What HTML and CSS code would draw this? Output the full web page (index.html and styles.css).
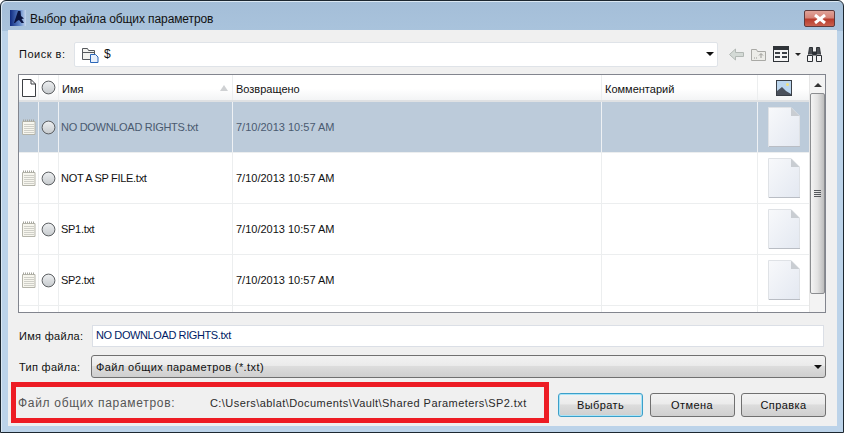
FILE: index.html
```html
<!DOCTYPE html>
<html lang="ru">
<head>
<meta charset="utf-8">
<title>Выбор файла общих параметров</title>
<link rel="stylesheet" href="styles.css">
</head>
<body>
<svg class="defs" width="0" height="0">
  <defs>
    <linearGradient id="radio" x1="0" y1="0" x2="0" y2="1"><stop offset="0" stop-color="#eef0f2"/><stop offset="1" stop-color="#c6cacd"/></linearGradient>
    <linearGradient id="thumb" x1="0" y1="0" x2="1" y2="1"><stop offset="0" stop-color="#f8f9fb"/><stop offset="1" stop-color="#e3e8f1"/></linearGradient>
    <linearGradient id="app" x1="0" y1="0" x2="1" y2="0"><stop offset="0" stop-color="#0f2a80"/><stop offset=".6" stop-color="#5f86c8"/><stop offset="1" stop-color="#c5d6ec"/></linearGradient>
    <symbol id="i-radio" viewBox="0 0 15 15"><circle cx="7.500" cy="7.500" r="6.400" fill="url(#radio)" stroke="#5c5f62" stroke-width="1"/></symbol>
    <symbol id="i-note" viewBox="0 0 14 16"><path d="M.5 2.500h12.500v13H.5z" fill="#f7f6ee" stroke="#b4b4aa"/><path d="M2 5.500h10M2 7.500h10M2 9.500h10M2 11.500h10M2 13.500h10" stroke="#cfcfc8"/><path d="M1 1.500h12" stroke="#a6a69e" stroke-dasharray="1 1" stroke-width="2"/></symbol>
    <symbol id="i-thumb" viewBox="0 0 32 40"><path d="M.5.500H23L31.500 9v30.500H.5z" fill="url(#thumb)" stroke="#dfe2e6"/><path d="M23 .5V9h8.500z" fill="#c9cdd2"/><path d="M1 39.500h31" stroke="#b9bdc4"/></symbol>
  </defs>
</svg>
<div class="window">
  <header class="titlebar">
    <svg class="app-icon" width="16" height="16" viewBox="0 0 16 16"><rect width="16" height="16" fill="url(#app)"/><path d="M4 13 8 1h2.500l.5 5 3 2.500-2.500.5 2.500 4h-2.500L9 10l-2 1-2 2z" fill="#0a1440"/></svg>
    <span class="title">Выбор файла общих параметров</span>
    <button class="close" aria-label="Закрыть"><svg width="14" height="10" viewBox="0 0 14 10"><path d="M2 1 12 9M12 1 2 9" stroke="#fff" stroke-width="3"/></svg></button>
  </header>
  <main class="panel">
    <div class="lookin">
      <label class="lookin-label">Поиск в:</label>
      <div class="lookin-combo">
        <svg width="17" height="17" viewBox="0 0 17 17"><path d="M.5 2.500h5l1 2h6v9H.5z" fill="#f2f2ee" stroke="#55585c"/><path d="M1 6.500h11" stroke="#55585c"/><path d="M8.500 8.500h5l2.500 2.500v5.500H8.500z" fill="#e8f0fb" stroke="#2a66b8"/></svg>
        <span class="lookin-value">$</span>
        <span class="arrow"></span>
      </div>
      <div class="tools">
        <svg width="15" height="13" viewBox="0 0 15 13"><path d="M.5 6.500 6.500 1v3.500h8v4h-8V12z" fill="#d4dad6" stroke="#b2b8b4"/></svg>
        <svg class="tool-up" width="15" height="13" viewBox="0 0 15 13"><path d="M.5 1.500h5l1 2h8v9H.5z" fill="#ecece8" stroke="#a9a9a5"/><path d="M10 10V6M8 7.500l2-2 2 2M3 10h1M5 10h1" stroke="#9a9a96" fill="none"/></svg>
        <svg class="tool-view" width="16" height="16" viewBox="0 0 16 16"><rect x=".5" y=".5" width="15" height="15" fill="#f4f4f4" stroke="#2f3338"/><rect x="1" y="1" width="14" height="3" fill="#2f3338"/><path d="M2 6h5v2H2zM9 6h5v2H9zM2 10h5v2H2zM9 10h5v2H9z" fill="#3c4046"/></svg>
        <span class="tool-arrow"></span>
        <svg class="tool-find" width="17" height="17" viewBox="0 0 17 17"><path d="M2.500 8.500 3.500 1.500h3v7M14.500 8.500l-1-7h-3v7" fill="#4a4e53" stroke="#2c3035"/><path d="M6.500 5.500h4v4h-4z" fill="#2c3035"/><path d="M1.500 9.500h5v6h-5zM10.500 9.500h5v6h-5z" fill="#f4f4f4" stroke="#2c3035"/></svg>
      </div>
    </div>

    <section class="list">
      <div class="list-body">
        <div class="row head">
          <div class="cell"><svg width="14" height="18" viewBox="0 0 14 18"><path d="M.5.500H9L13.500 5v12.500H.5z" fill="#fff" stroke="#3c3f43"/><path d="M9 .5V5h4.500" fill="none" stroke="#3c3f43"/></svg></div>
          <div class="cell"><svg class="radio" width="15" height="15"><use href="#i-radio"/></svg></div>
          <div class="cell text">Имя<span class="sort"></span></div>
          <div class="cell text">Возвращено</div>
          <div class="cell text">Комментарий</div>
          <div class="cell"><svg width="16" height="16" viewBox="0 0 16 16"><rect x=".5" y=".5" width="15" height="15" fill="#bcd6ee" stroke="#3a3f47"/><circle cx="11.500" cy="4.500" r="1.500" fill="#f3e27a"/><path d="M1 15V11l5-4 4 4 5 3v1z" fill="#4b515c"/></svg></div>
        </div>
        <div class="row selected">
          <div class="cell"><svg width="14" height="16"><use href="#i-note"/></svg></div>
          <div class="cell"><svg class="radio" width="15" height="15"><use href="#i-radio"/></svg></div>
          <div class="cell text file">NO DOWNLOAD RIGHTS.txt</div>
          <div class="cell text">7/10/2013 10:57 AM</div>
          <div class="cell"></div>
          <div class="cell"><svg width="32" height="40"><use href="#i-thumb"/></svg></div>
        </div>
        <div class="row">
          <div class="cell"><svg width="14" height="16"><use href="#i-note"/></svg></div>
          <div class="cell"><svg class="radio" width="15" height="15"><use href="#i-radio"/></svg></div>
          <div class="cell text file">NOT A SP FILE.txt</div>
          <div class="cell text">7/10/2013 10:57 AM</div>
          <div class="cell"></div>
          <div class="cell"><svg width="32" height="40"><use href="#i-thumb"/></svg></div>
        </div>
        <div class="row">
          <div class="cell"><svg width="14" height="16"><use href="#i-note"/></svg></div>
          <div class="cell"><svg class="radio" width="15" height="15"><use href="#i-radio"/></svg></div>
          <div class="cell text file">SP1.txt</div>
          <div class="cell text">7/10/2013 10:57 AM</div>
          <div class="cell"></div>
          <div class="cell"><svg width="32" height="40"><use href="#i-thumb"/></svg></div>
        </div>
        <div class="row">
          <div class="cell"><svg width="14" height="16"><use href="#i-note"/></svg></div>
          <div class="cell"><svg class="radio" width="15" height="15"><use href="#i-radio"/></svg></div>
          <div class="cell text file">SP2.txt</div>
          <div class="cell text">7/10/2013 10:57 AM</div>
          <div class="cell"></div>
          <div class="cell"><svg width="32" height="40"><use href="#i-thumb"/></svg></div>
        </div>
        <div class="row stub">
          <div class="cell"></div><div class="cell"></div><div class="cell"></div><div class="cell"></div><div class="cell"></div><div class="cell"></div>
        </div>
      </div>
      <div class="scrollbar">
        <span class="scroll-up"></span>
        <div class="thumb"><span class="grip"></span></div>
      </div>
    </section>

    <div class="field">
      <label class="field-label">Имя файла:</label>
      <div class="input">NO DOWNLOAD RIGHTS.txt</div>
    </div>
    <div class="field type">
      <label class="field-label">Тип файла:</label>
      <div class="select">Файл общих параметров (*.txt)<span class="arrow"></span></div>
    </div>

    <div class="bottom">
      <div class="shared">
        <span class="shared-label">Файл общих параметров:</span>
        <span class="shared-path">C:\Users\ablat\Documents\Vault\Shared Parameters\SP2.txt</span>
      </div>
      <div class="buttons">
        <button class="btn primary">Выбрать</button>
        <button class="btn">Отмена</button>
        <button class="btn">Справка</button>
      </div>
    </div>
  </main>
</div>
</body>
</html>
```
FILE: styles.css
```css
* { box-sizing: border-box; }
html, body { margin: 0; padding: 0; background: #fff; }
body { width: 846px; height: 434px; overflow: hidden; font-family: "Liberation Sans", sans-serif; font-size: 11px; color: #111; }
.defs { display: block; height: 0; }
.window { width: 844px; height: 433px; border: 1px solid #1c2730; border-radius: 6px 6px 0 0; background: linear-gradient(#a4bed8 0, #a9c3dc 30px, #bcd3e9 30px, #bcd3e9 100%); box-shadow: inset 1px 1px 0 #dbe8f3; padding: 0 6px 6px 7px; display: flex; flex-direction: column; }
.titlebar { height: 29px; flex: none; display: flex; align-items: flex-start; padding-top: 9px; margin-left: 2px; }
.app-icon { flex: none; }
.title { margin-left: 4px; margin-top: 2px; font-size: 12px; line-height: 14px; letter-spacing: -0.100px; color: #111; }
.close { margin-left: auto; margin-right: 2px; width: 31px; height: 17px; padding: 0; border: 1px solid #5e3a3c; border-radius: 2px; background: linear-gradient(#e0a298 0, #d58478 45%, #b83c2c 55%, #c9614f 100%); display: flex; align-items: center; justify-content: center; }
.panel { flex: 1; background: #f0f0f0; padding: 11px 10px 0 3px; display: flex; flex-direction: column; min-height: 0; }
.lookin { display: flex; align-items: center; height: 26px; padding-left: 8px; flex: none; }
.lookin-label { width: 55px; flex: none; letter-spacing: 0.500px; }
.lookin-combo { width: 644px; height: 25px; background: #fff; border: 1px solid #dfe3e8; border-radius: 2px; display: flex; align-items: center; padding-left: 7px; }
.lookin-value { margin-left: 5px; font-size: 12px; }
.arrow { display: block; width: 0; height: 0; border-left: 4px solid transparent; border-right: 4px solid transparent; border-top: 4px solid #111; margin-left: auto; margin-right: 3px; }
.tools { display: flex; align-items: center; margin-left: 11px; }
.tool-up { margin-left: 7px; }
.tool-view { margin-left: 7px; }
.tool-arrow { width: 0; height: 0; border-left: 3px solid transparent; border-right: 3px solid transparent; border-top: 3px solid #222; margin-left: 6px; }
.tool-find { margin-left: 5px; }
.list { margin-top: 7px; margin-left: 7px; width: 808px; height: 239px; border: 1px solid #82858e; background: #fff; display: flex; flex: none; overflow: hidden; }
.list-body { width: 790px; flex: none; }
.row { display: grid; grid-template-columns: 20px 20px 174px 369px 156px 51px; height: 51px; border-bottom: 1px solid #eceeef; }
.row.head { height: 27px; background: linear-gradient(#fff 0, #fff 55%, #f3f4f5 100%); border-bottom: 2px solid #dfe1e3; }
.row.head .text { padding-top: 2px; }
.row.selected { background: #bccbda; color: #4a5a70; }
.row.stub { height: 20px; border-bottom: 0; }
.cell { display: flex; align-items: center; justify-content: center; border-right: 1px solid #eceeef; min-width: 0; position: relative; }
.cell:last-child { border-right: 0; }
.selected .cell { border-right-color: #eef1f4; }
.cell.text { justify-content: flex-start; padding-left: 3px; white-space: nowrap; }
.cell.file { padding-left: 2px; letter-spacing: -0.300px; }
.radio { flex: none; }
.sort { position: absolute; right: 4px; top: 10px; width: 0; height: 0; border-left: 4px solid transparent; border-right: 4px solid transparent; border-bottom: 6px solid #cfd1d3; }
.scrollbar { flex: 1; background: #f3f3f3; position: relative; display: flex; flex-direction: column; align-items: center; border-left: 1px solid #e6e6e6; padding-top: 8px; }
.scroll-up { width: 0; height: 0; border-left: 4px solid transparent; border-right: 4px solid transparent; border-bottom: 4px solid #333; }
.thumb { width: 15px; height: 201px; margin-top: 6px; border: 1px solid #8b8d90; border-radius: 2px; background: linear-gradient(90deg, #f4f4f4 0, #e2e2e2 50%, #bdbdbd 100%); display: flex; align-items: center; justify-content: center; }
.grip { width: 7px; height: 7px; background: repeating-linear-gradient(#55585c 0, #55585c 1px, transparent 1px, transparent 2px); }
.field { display: flex; align-items: center; flex: none; margin-top: 12px; padding-left: 8px; height: 22px; }
.field.type { margin-top: 8px; height: 23px; }
.field-label { width: 73px; flex: none; letter-spacing: 0.300px; }
.input { width: 732px; height: 22px; border: 1px solid #dbdfe6; background: #fff; padding-left: 3px; color: #001c66; line-height: 19px; letter-spacing: -0.400px; }
.select { width: 735px; height: 23px; margin-left: -1px; border: 1px solid #707070; border-radius: 3px; background: linear-gradient(#f2f2f2 0, #ebebeb 45%, #dcdcdc 50%, #cfcfcf 100%); padding-left: 4px; display: flex; align-items: center; letter-spacing: 0.400px; }
.bottom { display: flex; align-items: center; flex: none; margin-top: 4px; height: 41px; }
.shared { width: 538px; height: 41px; border: 5px solid #ed1c24; display: flex; align-items: center; padding-left: 2px; flex: none; }
.shared-label { width: 192px; flex: none; font-size: 12px; color: #555; letter-spacing: 0.700px; }
.shared-path { white-space: nowrap; color: #2a2a2a; letter-spacing: 0.430px; }
.buttons { display: flex; margin-left: 9px; gap: 6.500px; margin-top: 5px; }
.btn { width: 85px; height: 24px; padding: 0; border: 1px solid #707070; border-radius: 3px; background: linear-gradient(#f2f2f2 0, #ebebeb 45%, #dcdcdc 50%, #cfcfcf 100%); font: inherit; color: #111; letter-spacing: 0.400px; }
.btn.primary { border: 1px solid #3c9fc9; box-shadow: inset 0 0 0 1px #a8e4f8; }
```
